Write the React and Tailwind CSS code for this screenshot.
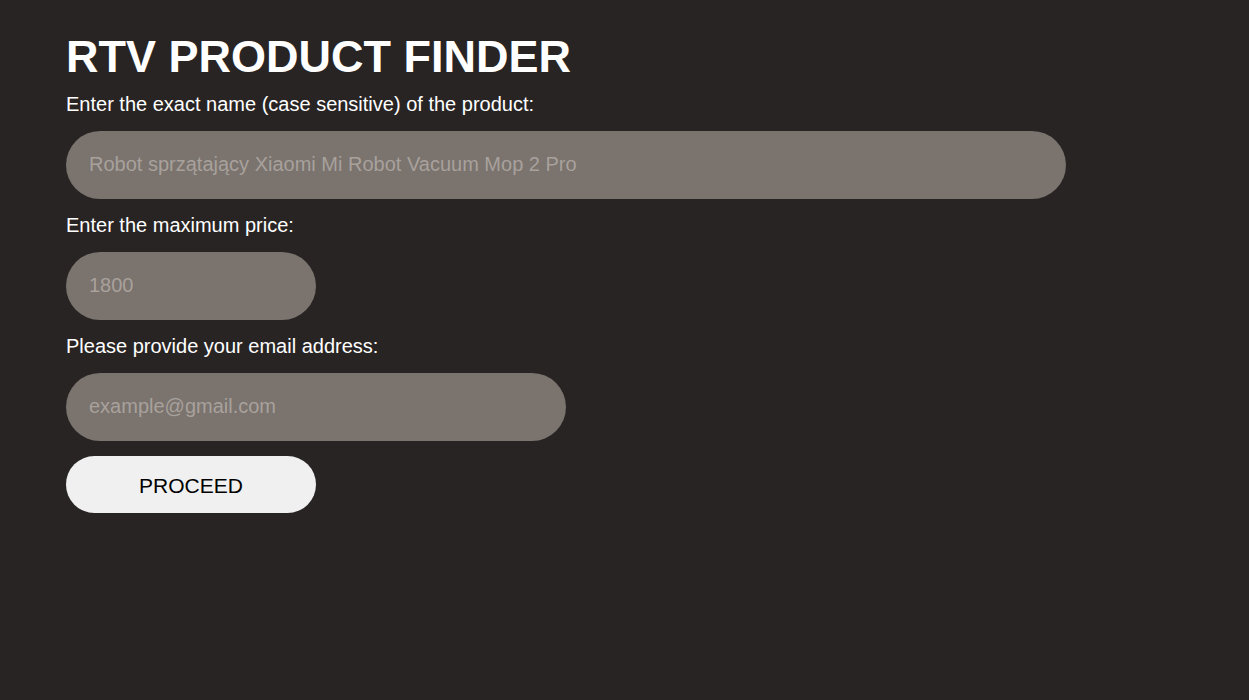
export default function App() {
  const font = { fontFamily: '"Liberation Sans", Arial, sans-serif' };
  return (
    <div className="min-h-[700px] w-full bg-[#282423] text-white" style={font}>
      <div className="flex flex-col items-start pl-[66px] pt-[31px]">
        <h1 className="text-[45px] font-bold leading-[52px] text-white">RTV PRODUCT FINDER</h1>
        <label className="mt-[10px] text-[20px] leading-[23px]">Enter the exact name (case sensitive) of the product:</label>
        <input
          className="mt-[15px] h-[68px] w-[1000px] rounded-full bg-[#7a736e] px-[23px] pb-[2px] text-[20px] text-white outline-none placeholder:text-[#a8a19c]"
          placeholder="Robot sprzątający Xiaomi Mi Robot Vacuum Mop 2 Pro"
        />
        <label className="mt-[15px] text-[20px] leading-[23px]">Enter the maximum price:</label>
        <input
          className="mt-[15px] h-[68px] w-[250px] rounded-full bg-[#7a736e] px-[23px] pb-[2px] text-[20px] text-white outline-none placeholder:text-[#a8a19c]"
          placeholder="1800"
        />
        <label className="mt-[15px] text-[20px] leading-[23px]">Please provide your email address:</label>
        <input
          className="mt-[15px] h-[68px] w-[500px] rounded-full bg-[#7a736e] px-[23px] pb-[2px] text-[20px] text-white outline-none placeholder:text-[#a8a19c]"
          placeholder="example@gmail.com"
        />
        <button className="mt-[15px] h-[57px] w-[250px] rounded-full bg-[#f0f0f0] pt-[2px] text-[21px] text-black">PROCEED</button>
      </div>
    </div>
  );
}
